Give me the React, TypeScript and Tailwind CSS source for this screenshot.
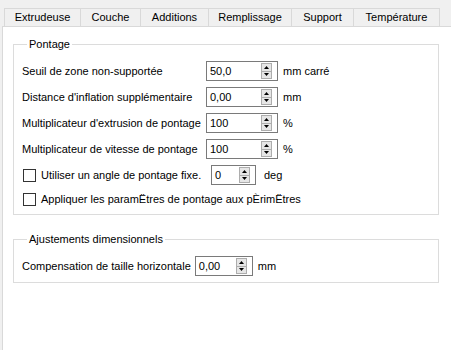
import React from "react";

const tabs = [
  { label: "Extrudeuse", w: "w-[77px]" },
  { label: "Couche", w: "w-[60px]" },
  { label: "Additions", w: "w-[68px]" },
  { label: "Remplissage", w: "w-[83px]" },
  { label: "Support", w: "w-[62px]" },
  { label: "Température", w: "w-[86px]" },
];

const SpinBox = ({ value, w }: { value: string; w: string }) => (
  <div className={`relative flex h-[20px] items-center border border-[#7a7a7a] bg-white pl-[3px] ${w}`}>
    <span className="leading-none text-black">{value}</span>
    {/* up / down buttons */}
    <div className="absolute top-[1px] right-[5px] bottom-[1px] flex w-[11px] flex-col border border-[#adadad] bg-[#e6e6e6]">
      <div className="flex flex-1 items-center justify-center border-b border-[#adadad]">
        <svg width="5" height="3" viewBox="0 0 5 3">
          <path d="M2.5 0 L5 3 L0 3 Z" fill="#000" />
        </svg>
      </div>
      <div className="flex flex-1 items-center justify-center">
        <svg width="5" height="3" viewBox="0 0 5 3">
          <path d="M0 0 L5 0 L2.5 3 Z" fill="#000" />
        </svg>
      </div>
    </div>
  </div>
);

const Checkbox = () => (
  <div className="h-[13px] w-[13px] shrink-0 border border-[#333] bg-white" />
);

const rows = [
  { label: "Seuil de zone non-supportée", value: "50,0", unit: "mm carré" },
  { label: "Distance d'inflation supplémentaire", value: "0,00", unit: "mm" },
  { label: "Multiplicateur d'extrusion de pontage", value: "100", unit: "%" },
  { label: "Multiplicateur de vitesse de pontage", value: "100", unit: "%" },
];

export default function App() {
  return (
    <div
      className="flex h-[350px] w-[451px] flex-col overflow-hidden bg-[#f0f0f0] pt-[8px] pl-[2px] text-[11px] text-black"
      style={{ fontFamily: '"Liberation Sans", Arial, sans-serif' }}
    >
      {/* Tabs */}
      <div className="flex pl-[2px]">
        {tabs.map((t, i) => (
          <div
            key={t.label}
            className={`flex h-[18px] items-center justify-center border-t border-r border-[#d9d9d9] bg-[#f0f0f0] ${t.w} ${i === 0 ? "border-l" : ""}`}
          >
            {t.label}
          </div>
        ))}
      </div>

      {/* Panel */}
      <div className="flex-1 border-t border-l border-[#d9d9d9] bg-white pt-[10px] pl-[10px]">
        <fieldset className="w-[426px] border border-[#dcdcdc] pr-[8px] pb-[4px] pl-[8px]">
          <legend className="ml-[5px] px-[2px] leading-[14px]">Pontage</legend>
          <div className="pt-[7px]">
            {rows.map((r) => (
              <div key={r.label} className="flex h-[26px] items-center">
                <span className="w-[184px]">{r.label}</span>
                <SpinBox value={r.value} w="w-[72px]" />
                <span className="ml-[5px]">{r.unit}</span>
              </div>
            ))}
            <div className="flex h-[26px] items-center pl-[1px]">
              <Checkbox />
              <span className="ml-[5px] w-[170px]">Utiliser un angle de pontage fixe.</span>
              <SpinBox value="0" w="w-[45px]" />
              <span className="ml-[8px]">deg</span>
            </div>
            <div className="flex h-[22px] items-center pl-[1px]">
              <Checkbox />
              <span className="ml-[5px]">Appliquer les paramËtres de pontage aux pÈrimËtres</span>
            </div>
          </div>
        </fieldset>

        <fieldset className="mt-[17px] w-[426px] border border-[#dcdcdc] pr-[8px] pb-[3px] pl-[8px]">
          <legend className="ml-[5px] px-[2px] leading-[14px]">Ajustements dimensionnels</legend>
          <div className="pt-[7px]">
            <div className="flex h-[26px] items-center">
              <span className="mr-[4px]">Compensation de taille horizontale</span>
              <SpinBox value="0,00" w="w-[58px]" />
              <span className="ml-[5px]">mm</span>
            </div>
          </div>
        </fieldset>
      </div>
    </div>
  );
}
